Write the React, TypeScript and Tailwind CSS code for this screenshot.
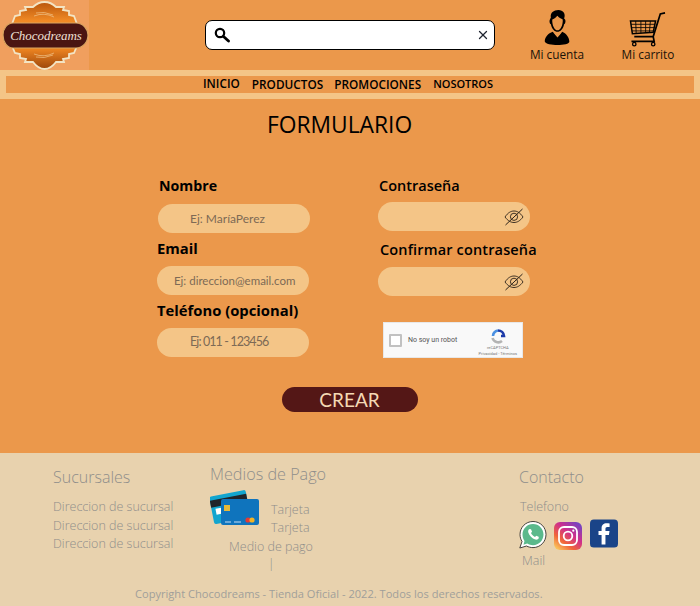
import React from "react";
import { X } from "lucide-react";

const sans = "font-['Open_Sans',sans-serif]";
const inputFont = "font-['Lato',sans-serif]";

const Logo = () => (
  <svg width="89" height="70" viewBox="0 0 89 70" className="block">
    <defs>
      <linearGradient id="medal" x1="0" y1="0" x2="0" y2="1">
        <stop offset="0" stopColor="#b9560c" />
        <stop offset="0.28" stopColor="#f08a25" />
        <stop offset="0.72" stopColor="#e8801f" />
        <stop offset="1" stopColor="#9c460b" />
      </linearGradient>
    </defs>
    <rect width="89" height="70" fill="#f09f5e" />
    <path
      d="M44.5 2 C39 2 36 4 33 7 L25 7 L26 10 L20 11 L20 15 L15 16 L12 24 L77 24 L74 16 L69 15 L69 11 L63 10 L64 7 L56 7 C53 4 50 2 44.5 2 Z M12 46 L15 53 L20 54 L20 58 L26 59 L25 62 L33 62 C36 66 40 69 44.5 69 C49 69 53 66 56 62 L64 62 L63 59 L69 58 L69 54 L74 53 L77 46 Z"
      fill="url(#medal)"
      stroke="#f3e4c4"
      strokeWidth="1.8"
    />
    <path d="M34 16 q10 -4 20 1 M36 13 q8 -2 17 2 M34 54 q10 4 20 -1 M36 57 q8 2 17 -2" stroke="#f2c58d" strokeWidth="0.7" fill="none" />
    <path
      d="M13 23 L76 23 C83 23 88 29 88 35 C88 42 83 48 76 48 L13 48 C7 48 3 42 3 35 C3 29 7 23 13 23 Z"
      fill="#4a1512"
      stroke="#d9a560"
      strokeWidth="1.2"
    />
    <text x="46" y="40" textAnchor="middle" fontFamily="'Liberation Serif', serif" fontStyle="italic" fontSize="13" fill="#efe0d6">
      Chocodreams
    </text>
  </svg>
);

const UserIcon = () => (
  <svg width="27" height="36" viewBox="0 0 28 38" className="block">
    <path d="M7 8 C6 3 10 0 15 0 C20 0 23 4 21 9 L22 10 C23 12 22 15 21 15 C20 20 17 23 14 23 C11 23 8 20 7 15 C6 15 5 12 6 10 Z" fill="#000" />
    <path d="M8.5 10 C11 9 13 7 14 6 C15 8 18 9 19.5 10 C20 16 17 21.5 14 21.5 C11 21.5 8 16 8.5 10 Z" fill="#eb984b" />
    <path d="M9 23 C4 25 1 28 0.5 33 C1 36 8 37 14 37 C20 37 27 36 26.5 33 C26 28 23 25 19 23 L16.5 26 L14 29 L11.5 26 Z" fill="#000" />
    <path d="M11 25 L14 28 L17 25 L17 24 L14 26 L11 24 Z" fill="#eb984b" />
  </svg>
);

const CartIcon = () => (
  <svg width="38" height="35" viewBox="0 0 39 37" className="block" fill="none" stroke="#000">
    <path d="M37.5 1 L32.5 2 L25 26 L5 26" strokeWidth="1.8" />
    <path d="M1 9.5 L27.5 9.5 L25 21.5 L3 23 Z" strokeWidth="1.6" />
    <path d="M1.5 13 H27 M2 16.5 H26 M2.5 20 H25.5 M6.5 9.5 L7 22.5 M12 9.5 V22.5 M17 9.5 V22 M22 9.5 L21 21.5" strokeWidth="0.9" />
    <path d="M2 31 H26 L25 26" strokeWidth="1.8" />
    <circle cx="5" cy="34" r="1.8" strokeWidth="1.4" />
    <circle cx="25" cy="34" r="1.8" strokeWidth="1.4" />
  </svg>
);

const SearchIcon = () => (
  <svg width="16" height="16" viewBox="0 0 16 16" className="block" fill="none" stroke="#000">
    <circle cx="6" cy="6" r="4.2" strokeWidth="2.2" />
    <path d="M9.5 9.5 L14.5 14" strokeWidth="2.8" strokeLinecap="round" />
  </svg>
);

const EyeOff = () => (
  <svg width="20" height="18" viewBox="0 0 20 18" className="block" fill="none" stroke="#2a2118" strokeWidth="0.9">
    <path d="M1 9 C4 4.5 7 3 10 3 C13 3 16 4.5 19 9 C16 13 13 14.5 10 14.5 C7 14.5 4 13 1 9 Z" />
    <circle cx="10" cy="8.8" r="3.6" />
    <path d="M1.5 17 L18.5 1" strokeWidth="1" />
  </svg>
);

const Cards = () => (
  <svg width="50" height="36" viewBox="0 0 50 36" className="block">
    <g transform="rotate(-11 20 15)">
      <rect x="1" y="3" width="37" height="28" rx="2" fill="#12a5cf" />
      <rect x="1" y="7" width="37" height="7" fill="#20242a" />
      <rect x="5" y="16" width="6" height="6" fill="#ffffff" />
    </g>
    <rect x="11" y="9" width="38" height="26" rx="2" fill="#0f74bd" />
    <rect x="14" y="15" width="6" height="6" fill="#e8b93a" />
    <rect x="15" y="31" width="6" height="2" fill="#6aa8d8" />
    <rect x="24" y="31" width="7" height="2" fill="#6aa8d8" />
    <circle cx="38" cy="30" r="2.6" fill="#e23a36" />
    <circle cx="42" cy="30" r="2.6" fill="#f4b324" />
  </svg>
);

const Whatsapp = () => (
  <svg width="28" height="30" viewBox="0 0 28 30" className="block">
    <path d="M14 1.5 C6.5 1.5 1 7.5 1 14.5 C1 17 1.8 19.5 3 21.5 L0.8 28 L7.5 26 C9.5 27 11.8 27.6 14 27.6 C21.5 27.6 27 21.5 27 14.5 C27 7.5 21.5 1.5 14 1.5 Z" fill="#fff" stroke="#33302c" strokeWidth="0.9" />
    <path d="M14 4 C8 4 3.5 9 3.5 14.5 C3.5 17 4.3 19 5.5 21 L4.5 24.7 L8.2 23.6 C10 24.6 12 25.2 14 25.2 C20 25.2 24.5 20.3 24.5 14.5 C24.5 9 20 4 14 4 Z" fill="#5bb98c" />
    <path d="M10.5 9 C9.5 9.5 8.8 10.8 9.3 12.5 C10.3 15.8 13 18.5 16.3 19.5 C18 20 19.3 19.2 19.8 18 L19.6 16.8 L17.3 15.7 L16 17 C14.3 16.3 12.7 14.7 12 13 L13.1 11.7 L12 9.2 Z" fill="#fff" />
  </svg>
);

const Instagram = () => (
  <svg width="28" height="28" viewBox="0 0 28 28" className="block">
    <defs>
      <linearGradient id="ig" x1="0.1" y1="1" x2="0.9" y2="0">
        <stop offset="0" stopColor="#fbcf5f" />
        <stop offset="0.3" stopColor="#f0653a" />
        <stop offset="0.6" stopColor="#cf2f8c" />
        <stop offset="1" stopColor="#6a46c8" />
      </linearGradient>
    </defs>
    <rect width="28" height="28" rx="6" fill="url(#ig)" />
    <rect x="5" y="5" width="18" height="18" rx="5" fill="none" stroke="#fff" strokeWidth="1.8" />
    <circle cx="14" cy="14" r="4.3" fill="none" stroke="#fff" strokeWidth="1.8" />
    <circle cx="19.3" cy="8.7" r="1.1" fill="#fff" />
  </svg>
);

const Facebook = () => (
  <svg width="28" height="29" viewBox="0 0 29 29" className="block">
    <rect width="29" height="29" rx="4" fill="#1a4488" />
    <path d="M16 26 V16 H19.6 L20.2 12 H16 V9.8 C16 8.6 16.5 7.8 18 7.8 H20.3 V4.2 C19.6 4.1 18.4 4 17.2 4 C14.2 4 12 5.8 12 9.2 V12 H8.8 V16 H12 V26 Z" fill="#fff" />
  </svg>
);

const Captcha = () => (
  <div className="flex h-[36px] w-[140px] items-center border border-[#e8e8e8] bg-[#f9f9f9] pl-[5px] font-['Roboto',sans-serif]">
    <div className="mt-[1px] h-[13px] w-[13px] rounded-[1px] border-2 border-[#c1c1c1] bg-white" />
    <span className="ml-[6px] mt-[1px] text-[7px] text-[#555555]">No soy un robot</span>
    <div className="ml-auto mr-[5px] flex flex-col items-center pt-[5px]">
      <svg width="16" height="15" viewBox="0 0 16 15" className="block" fill="none">
        <path d="M2.5 9 A6 6 0 0 0 12 12" stroke="#b3b3b3" strokeWidth="2.6" />
        <path d="M3 7 A6 6 0 0 1 8 1.5" stroke="#4a90e2" strokeWidth="2.6" />
        <path d="M8 1.5 A6 6 0 0 1 14 7 L11 7" stroke="#1c3aa9" strokeWidth="2.6" />
      </svg>
      <span className="mt-[1px] text-[4px] leading-[6px] text-[#777777]">reCAPTCHA</span>
      <span className="text-[4px] leading-[6px] text-[#777777]">Privacidad - Términos</span>
    </div>
  </div>
);

const Field = ({
  label,
  placeholder,
  labelClass,
  boxClass,
  textClass,
}: {
  label: string;
  placeholder: string;
  labelClass: string;
  boxClass: string;
  textClass: string;
}) => (
  <div>
    <label className={`block font-bold leading-[20px] text-black ${labelClass}`}>{label}</label>
    <div className={`flex h-[29px] w-[152px] items-center rounded-full bg-[#f4c587] ${boxClass}`}>
      <span className={`${inputFont} text-[#7d6a55] ${textClass}`}>{placeholder}</span>
    </div>
  </div>
);

const PasswordField = ({ label, labelClass, boxClass }: { label: string; labelClass: string; boxClass: string }) => (
  <div>
    <label className={`block text-[14.5px] font-semibold leading-[20px] text-black ${labelClass}`}>{label}</label>
    <div className={`flex h-[29px] w-[152px] items-center justify-end rounded-full bg-[#f4c587] pr-[6px] ${boxClass}`}>
      <EyeOff />
    </div>
  </div>
);

export default function App() {
  return (
    <div className={`flex h-[606px] w-[700px] flex-col overflow-hidden bg-[#eb984b] ${sans}`}>
      <header className="flex h-[70px] shrink-0">
        <Logo />
        <div className="ml-[116px] mt-[20px] flex h-[30px] w-[290px] items-center justify-between rounded-[7px] border border-black bg-white pl-[8px] pr-[4px]">
          <SearchIcon />
          <X size={14} strokeWidth={2.2} className="text-[#1f2430]" />
        </div>
        <div className="ml-[35px] flex w-[54px] flex-col items-center pt-[10px]">
          <UserIcon />
          <span className="whitespace-nowrap text-[11.8px] leading-[16px] text-[#1a1208]">Mi cuenta</span>
        </div>
        <div className="ml-[37px] flex w-[54px] flex-col items-center pt-[12px]">
          <CartIcon />
          <span className="-mt-[1px] whitespace-nowrap text-[11.8px] leading-[16px] text-[#1a1208]">Mi carrito</span>
        </div>
      </header>

      <nav className="h-[29px] shrink-0 bg-[#f4c587] p-[6px]">
        <div className="flex h-[17px] items-center bg-[#eb984b] pl-[197px] text-black">
          <span className="mb-[2px] text-[11.8px] font-semibold">INICIO</span>
          <span className="ml-[12px] mt-[1px] text-[11.8px] font-semibold">PRODUCTOS</span>
          <span className="ml-[11px] mt-[1px] text-[11.8px] font-semibold">PROMOCIONES</span>
          <span className="ml-[12px] text-[11px] font-semibold">NOSOTROS</span>
        </div>
      </nav>

      <main className="h-[354px] shrink-0">
        <h1 className="ml-[267px] mt-[11px] text-[22.8px] leading-[30px] text-black">FORMULARIO</h1>

        <div className="ml-[157px] mt-[36px] flex">
          <div className="flex w-[221px] flex-col">
            <Field label="Nombre" placeholder="Ej: MaríaPerez" labelClass="ml-[2px] text-[14.2px]" boxClass="ml-[1px] mt-[8px] pl-[32px]" textClass="text-[12px]" />
            <div className="mt-[5px]">
              <Field label="Email" placeholder="Ej: direccion@email.com" labelClass="text-[14.8px]" boxClass="mt-[8px] pl-[17px]" textClass="text-[11.5px]" />
            </div>
            <div className="mt-[5px]">
              <Field label="Teléfono (opcional)" placeholder="Ej: 011 - 123456" labelClass="text-[14.8px]" boxClass="mt-[8px] pl-[33px]" textClass="text-[12.5px] tracking-[-0.9px]" />
            </div>
          </div>
          <div className="flex flex-col">
            <PasswordField label="Contraseña" labelClass="ml-[1px]" boxClass="mt-[6px]" />
            <div className="mt-[9px]">
              <PasswordField label="Confirmar contraseña" labelClass="ml-[2px] tracking-[0.15px]" boxClass="mt-[7px]" />
            </div>
            <div className="ml-[5px] mt-[26px]">
              <Captcha />
            </div>
          </div>
        </div>

        <div className="ml-[282px] mt-[29px] flex h-[25px] w-[136px] items-center justify-center rounded-full bg-[#541716]">
          <span className={`${inputFont} -ml-[1px] text-[19px] leading-[25px] text-[#f4d9b4]`}>CREAR</span>
        </div>
      </main>

      <footer className="flex flex-1 flex-col bg-[#e8d2ae] text-[#8f8e8b]">
        <div className="flex h-[130px] shrink-0">
          <div className="ml-[53px] w-[157px] pt-[14px]">
            <h3 className="text-[16px] font-light leading-[20px]">Sucursales</h3>
            <ul className="mt-[11px] text-[12.5px] font-light leading-[18.5px]">
              <li>Direccion de sucursal</li>
              <li>Direccion de sucursal</li>
              <li>Direccion de sucursal</li>
            </ul>
          </div>
          <div className="w-[309px] pt-[11px]">
            <h3 className="text-[16.2px] font-light leading-[20px]">Medios de Pago</h3>
            <div className="mt-[6px] flex h-[48px]">
              <Cards />
              <div className="ml-[11px] mt-[11px] text-[12.5px] font-light leading-[18px]">
                <p>Tarjeta</p>
                <p>Tarjeta</p>
              </div>
            </div>
            <p className="ml-[19px] text-[12.5px] font-light leading-[18px]">Medio de pago</p>
            <p className="ml-[58px] mt-[1px] text-[12px] font-light leading-[14px]">|</p>
          </div>
          <div className="pt-[14px]">
            <h3 className="text-[16px] font-light leading-[20px]">Contacto</h3>
            <p className="ml-[1px] mt-[11px] text-[12.5px] font-light leading-[18px]">Telefono</p>
            <div className="mt-[2px] flex items-start">
              <div className="mt-[2px]"><Whatsapp /></div>
              <div className="ml-[7px] mt-[4px]"><Instagram /></div>
              <div className="ml-[8px] mt-[1px]"><Facebook /></div>
            </div>
            <p className="ml-[3px] mt-[2px] text-[12.5px] font-light leading-[18px]">Mail</p>
          </div>
        </div>
        <p className="ml-[135px] mt-[3px] text-[11.1px] leading-[16px] text-[#a09f9a]">
          Copyright Chocodreams - Tienda Oficial - 2022. Todos los derechos reservados.
        </p>
      </footer>
    </div>
  );
}
